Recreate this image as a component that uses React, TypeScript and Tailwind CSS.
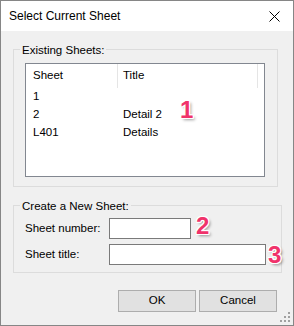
import React from "react";

const pinkNum =
  "font-['Liberation_Sans',Arial,sans-serif] font-bold text-[24px] leading-none text-[#f0336b] [text-shadow:-1px_-1px_0_#fff,1px_-1px_0_#fff,-1px_1px_0_#fff,1px_1px_0_#fff,0_-1px_0_#fff,0_1px_0_#fff,-1px_0_0_#fff,1px_0_0_#fff,2px_2px_3px_rgba(0,0,0,0.4)]";

export default function App() {
  return (
    <div className="relative w-[294px] h-[326px] border border-[#868686] bg-[#f0f0f0] flex flex-col text-[11.5px] text-black font-['Liberation_Sans',Arial,sans-serif]">
      {/* Title bar */}
      <div className="h-[30px] bg-white flex items-center pl-[8px] pr-[13px]">
        <span className="text-[12px]">Select Current Sheet</span>
        <svg className="ml-auto" width="11" height="11" viewBox="0 0 11 11">
          <path d="M0.5 0.5 L10.5 10.5 M10.5 0.5 L0.5 10.5" stroke="#000" strokeWidth="1" fill="none" />
        </svg>
      </div>

      {/* Existing Sheets group */}
      <fieldset className="ml-[12px] mt-[10px] w-[265px] border border-[#dcdcdc] p-0 m-0">
        <legend className="ml-[6px] px-[2px] pt-[2px] leading-[14px]">Existing Sheets:</legend>
        <div className="pt-[6px] pb-[9px] pl-[11px]">
          <div className="relative w-[240px] h-[114px] border border-[#828790] bg-white">
            <div className="h-[24px] flex">
              <div className="w-[91px] pl-[7px] flex items-center">Sheet</div>
              <div className="w-[1px] bg-[#e5e5e5]" />
              <div className="w-[139px] pl-[5px] flex items-center">Title</div>
              <div className="w-[1px] bg-[#e5e5e5]" />
            </div>
            {[
              ["1", ""],
              ["2", "Detail 2"],
              ["L401", "Details"],
            ].map(([a, b]) => (
              <div key={a} className="h-[18px] flex items-center">
                <div className="w-[92px] pl-[7px]">{a}</div>
                <div className="pl-[5px]">{b}</div>
              </div>
            ))}
            <span className={`absolute left-[154px] top-[34px] ${pinkNum}`}>1</span>
          </div>
        </div>
      </fieldset>

      {/* Create a New Sheet group */}
      <fieldset className="ml-[12px] mt-[10px] w-[265px] border border-[#dcdcdc] p-0 m-0">
        <legend className="ml-[6px] px-[2px] pt-[2px] leading-[14px]">Create a New Sheet:</legend>
        <div className="pt-[5px] pb-[7px] pl-[11px] flex flex-col gap-[5px]">
          <div className="h-[21px] flex items-center">
            <span className="w-[84px]">Sheet number:</span>
            <div className="w-[82px] h-[21px] border border-[#7a7a7a] bg-white" />
            <span className={`ml-[5px] -mt-[6px] ${pinkNum}`}>2</span>
          </div>
          <div className="h-[21px] flex items-center">
            <span className="w-[84px]">Sheet title:</span>
            <div className="w-[157px] h-[21px] border border-[#7a7a7a] bg-white" />
            <span className={`ml-[2px] ${pinkNum}`}>3</span>
          </div>
        </div>
      </fieldset>

      {/* Buttons */}
      <div className="mt-[17px] mr-[16px] flex justify-end gap-[3px]">
        <div className="w-[78px] h-[22px] border border-[#adadad] bg-[#e1e1e1] flex items-center justify-center">OK</div>
        <div className="w-[78px] h-[22px] border border-[#adadad] bg-[#e1e1e1] flex items-center justify-center">Cancel</div>
      </div>

      {/* Size grip */}
      <svg className="absolute right-[2px] bottom-[2px]" width="11" height="11" viewBox="0 0 11 11">
        <rect x="8" y="0" width="2" height="2" fill="#a0a0a0" />
        <rect x="4" y="4" width="2" height="2" fill="#a0a0a0" />
        <rect x="8" y="4" width="2" height="2" fill="#a0a0a0" />
        <rect x="0" y="8" width="2" height="2" fill="#a0a0a0" />
        <rect x="4" y="8" width="2" height="2" fill="#a0a0a0" />
        <rect x="8" y="8" width="2" height="2" fill="#a0a0a0" />
      </svg>
    </div>
  );
}
